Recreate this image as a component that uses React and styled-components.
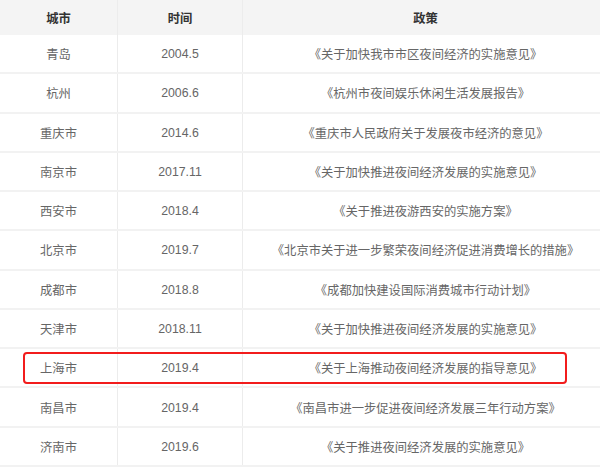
import React from "react";
import styled, { createGlobalStyle } from "styled-components";

const Global = createGlobalStyle`
  html, body { margin: 0; padding: 0; background: #fff; }
  body { width: 600px; height: 471px; overflow: hidden; }
`;

const Table = styled.div`
  width: 608px;
  font-family: "Liberation Sans", "Noto Sans CJK SC", sans-serif;
  font-size: 12.3px;
`;

const Grid = styled.div`
  display: grid;
  grid-template-columns: 117px 125px 1fr;
  position: relative;
  box-sizing: border-box;
  height: ${(p) => (p.$head ? "35px" : "39.27px")};
  background: ${(p) => (p.$head ? "#f4f4f4" : "#fff")};
  border-bottom: ${(p) => (p.$head ? "none" : "2px solid #f2f2f2")};
`;

const Cell = styled.div`
  display: flex;
  align-items: center;
  justify-content: center;
  border-left: ${(p) => (p.$first ? "none" : "1px solid #ececec")};
  color: ${(p) => (p.$head ? "#333" : "#666")};
  font-weight: ${(p) => (p.$head ? 700 : 400)};
  white-space: nowrap;
  padding-top: ${(p) => (p.$head ? "0" : "1px")};
`;

const Highlight = styled.div`
  position: absolute;
  left: 23px;
  width: 544px;
  top: 3px;
  height: 32px;
  box-sizing: border-box;
  border: 2.5px solid #f21c1c;
  border-radius: 4px;
  pointer-events: none;
`;

const rows = [
  ["青岛", "2004.5", "《关于加快我市市区夜间经济的实施意见》"],
  ["杭州", "2006.6", "《杭州市夜间娱乐休闲生活发展报告》"],
  ["重庆市", "2014.6", "《重庆市人民政府关于发展夜市经济的意见》"],
  ["南京市", "2017.11", "《关于加快推进夜间经济发展的实施意见》"],
  ["西安市", "2018.4", "《关于推进夜游西安的实施方案》"],
  ["北京市", "2019.7", "《北京市关于进一步繁荣夜间经济促进消费增长的措施》"],
  ["成都市", "2018.8", "《成都加快建设国际消费城市行动计划》"],
  ["天津市", "2018.11", "《关于加快推进夜间经济发展的实施意见》"],
  ["上海市", "2019.4", "《关于上海推动夜间经济发展的指导意见》", true],
  ["南昌市", "2019.4", "《南昌市进一步促进夜间经济发展三年行动方案》"],
  ["济南市", "2019.6", "《关于推进夜间经济发展的实施意见》"],
];

export default function App() {
  return (
    <>
      <Global />
      <Table>
        <Grid $head>
          <Cell $head $first>城市</Cell>
          <Cell $head>时间</Cell>
          <Cell $head>政策</Cell>
        </Grid>
        {rows.map(([city, time, policy, hl]) => (
          <Grid key={city + time}>
            <Cell $first>{city}</Cell>
            <Cell>{time}</Cell>
            <Cell>{policy}</Cell>
            {hl && <Highlight />}
          </Grid>
        ))}
      </Table>
    </>
  );
}
